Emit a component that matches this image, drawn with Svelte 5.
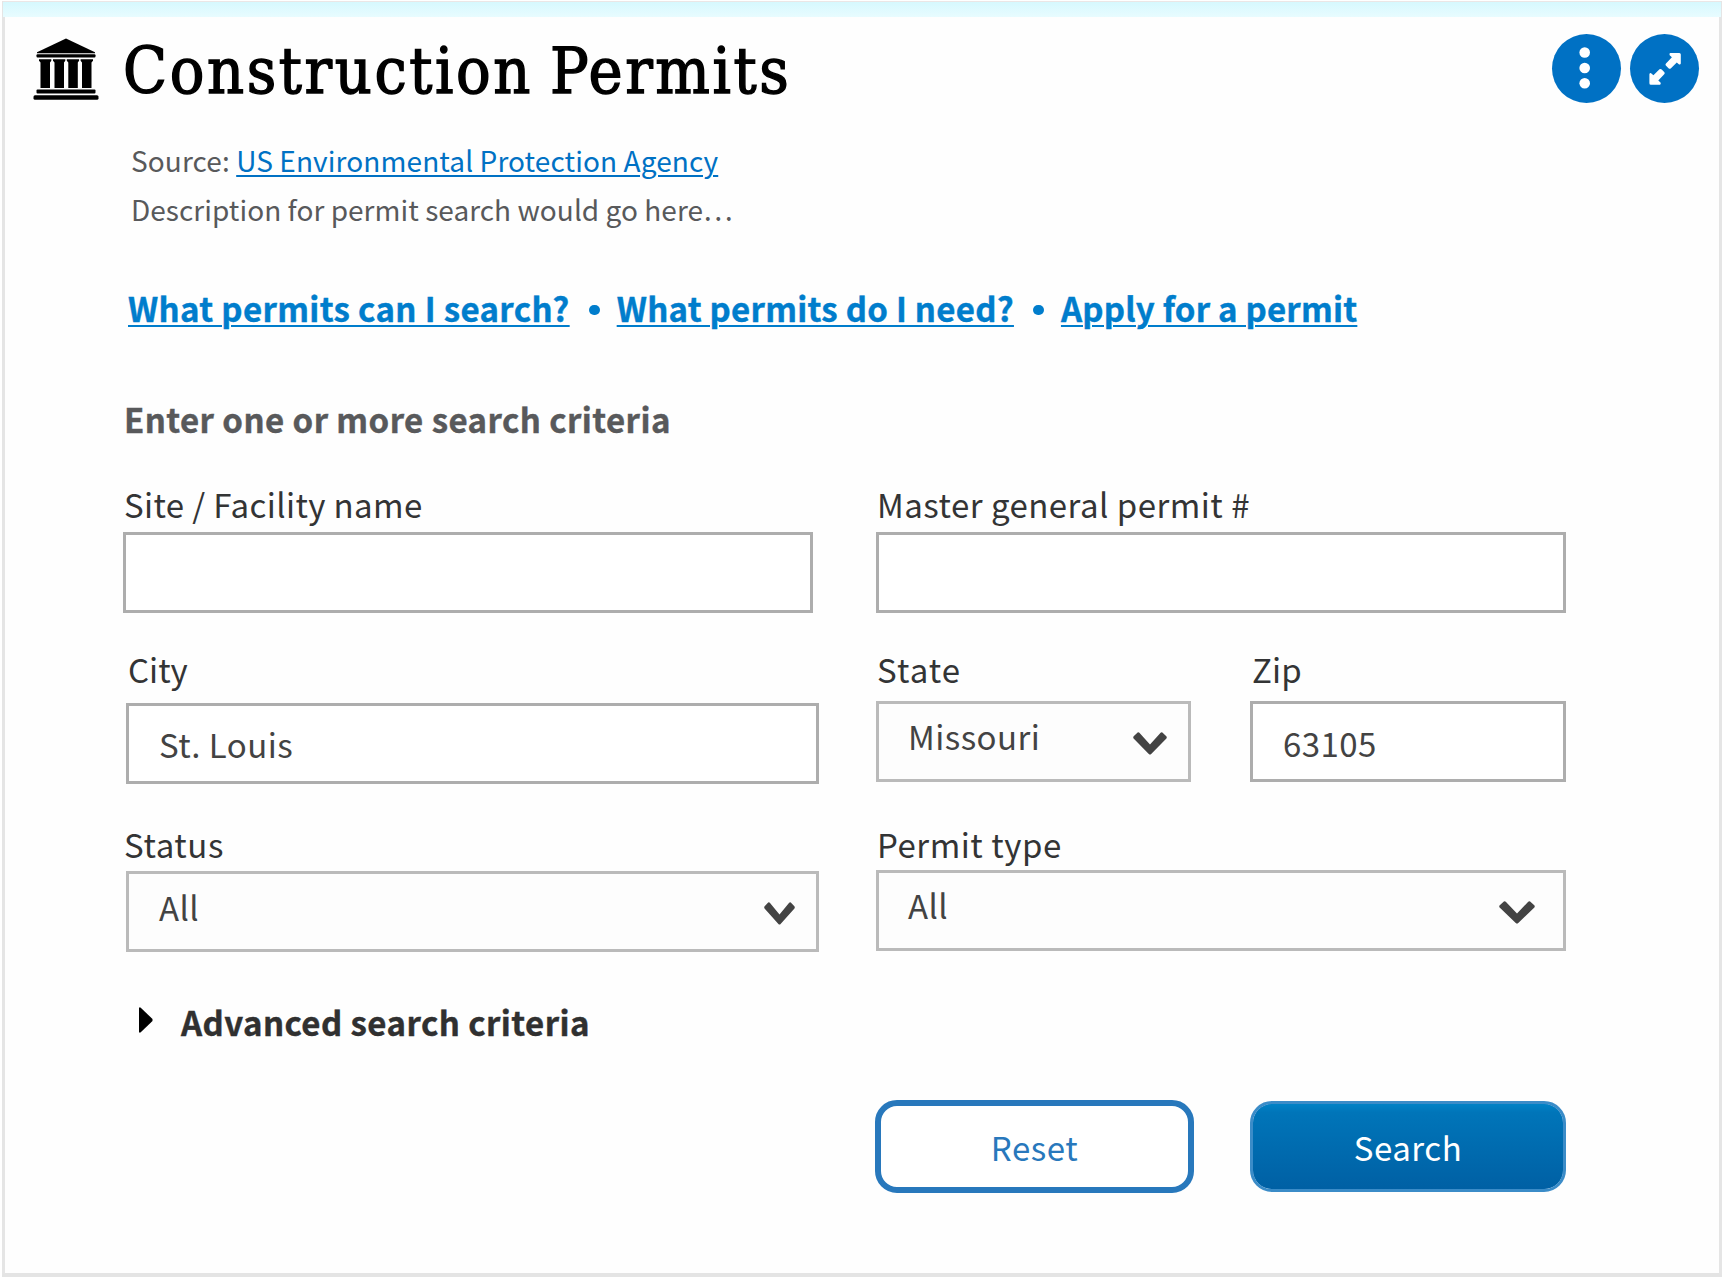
<script>
  let site = $state('');
  let master = $state('');
  let city = $state('St. Louis');
  let zip = $state('63105');
</script>

{#snippet chevron(size)}
  <svg class="chevron {size}" viewBox="0 0 34 23" preserveAspectRatio="none" aria-hidden="true">
    <path d="M4.6.6Q5.5 0 6.4.8L17 12.5 27.600.8Q28.500 0 29.400.6L33.300 4.300Q34.200 5.300 33.400 6.500L18.200 22Q17 23 15.800 22L.6 6.500Q-.2 5.300.7 4.300Z" />
  </svg>
{/snippet}

<main class="card">
  <div class="band"></div>
  <header>
    <svg class="bank" viewBox="0 0 66 63" aria-hidden="true">
      <path d="M33 0.400 62 14.300V15.300H4V14.300Z" />
      <rect x="3.500" y="16.300" width="59" height="3.300" rx="1" />
      <path d="M6 21.200H18.300V22.800L17 24.500V50H7.500V24.500L6 22.800Z M20 21.200H32.300V22.800L31 24.500V50H21.500V24.500L20 22.800Z M33.800 21.200H46.100V22.800L44.800 24.500V50H35.300V24.500L33.800 22.800Z M47.600 21.200H60V22.800L58.500 24.500V50H49V24.500L47.600 22.800Z" />
      <rect x="3.500" y="51.400" width="59" height="4.200" rx="1" />
      <rect x="0.500" y="57.200" width="65" height="4.600" rx="1.500" />
    </svg>
    <h1>Construction Permits</h1>
    <div class="actions">
      <button class="round" aria-label="More options">
        <svg viewBox="0 0 69 69"><g><circle cx="32.700" cy="18.500" r="5.300" /><circle cx="32.700" cy="34" r="5.300" /><circle cx="32.700" cy="49.300" r="5.300" /></g></svg>
      </button>
      <button class="round" aria-label="Expand">
        <svg viewBox="0 0 69 69">
          <path d="M40.300 19H49.300Q50.800 19 50.800 20.500V29.500Q50.300 31.200 48.800 30.300L46.800 28.400 40.700 34.400Q39.600 35.300 38.500 34.200L35.800 31.500Q35 30.400 36 29.400L41.900 23.300 39.700 21.200Q38.800 19.500 40.300 19Z" />
          <path d="M29.900 50.700H20.900Q19.400 50.700 19.400 49.200V40.200Q19.900 38.500 21.400 39.400L23.400 41.300 29.500 35.300Q30.600 34.400 31.700 35.500L34.400 38.200Q35.200 39.300 34.200 40.300L28.300 46.400 30.500 48.500Q31.400 50.200 29.900 50.700Z" />
        </svg>
      </button>
    </div>
  </header>

  <section class="meta">
    <p>Source: <a href="#epa">US Environmental Protection Agency</a></p>
    <p class="desc">Description for permit search would go here…</p>
  </section>

  <nav>
    <a class="n1" href="#which">What permits can I search?</a>
    <span class="dot"></span>
    <a class="n2" href="#need">What permits do I need?</a>
    <span class="dot"></span>
    <a class="n3" href="#apply">Apply for a permit</a>
  </nav>

  <h2>Enter one or more search criteria</h2>

  <form onsubmit={(e) => e.preventDefault()}>
    <div class="row first">
      <div class="field">
        <label class="site" for="site">Site / Facility name</label>
        <input id="site" bind:value={site} />
      </div>
      <div class="field">
        <label for="master">Master general permit #</label>
        <input id="master" bind:value={master} />
      </div>
    </div>

    <div class="row second">
      <div class="field outset city">
        <label for="city">City</label>
        <input id="city" bind:value={city} />
      </div>
      <div class="pair">
        <div class="field">
          <label class="state" for="state">State</label>
          <button type="button" id="state" class="select"><span>Missouri</span>{@render chevron('mid')}</button>
        </div>
        <div class="field">
          <label class="zip" for="zip">Zip</label>
          <input id="zip" class="code" bind:value={zip} />
        </div>
      </div>
    </div>

    <div class="row third">
      <div class="field outset status">
        <label for="status">Status</label>
        <button type="button" id="status" class="select"><span>All</span>{@render chevron('small')}</button>
      </div>
      <div class="field">
        <label class="type" for="type">Permit type</label>
        <button type="button" id="type" class="select"><span>All</span>{@render chevron('large')}</button>
      </div>
    </div>

    <div class="advanced">
      <svg viewBox="0 0 15 26" aria-hidden="true"><path d="M1 0.500H2.500L14.500 12V14L2.500 25.500H1Z" /></svg>
      <strong>Advanced search criteria</strong>
    </div>

    <div class="buttons">
      <button type="reset" class="reset">Reset</button>
      <button type="submit" class="search">Search</button>
    </div>
  </form>
</main>

<style>
  :global(body) {
    background: #fff;
  }
  * {
    box-sizing: border-box;
    margin: 0;
  }
  .card {
    width: 1720px;
    height: 1276px;
    margin: 1px 0 0 2px;
    border: 3px solid #e5e5e5;
    border-top: 1px solid #ebe6e6;
    border-bottom: 4px solid #e4e4e4;
    background: #fefefe;
    color: #333435;
    font: 33px/40px 'Noto Sans CJK SC', 'Noto Sans', sans-serif;
    letter-spacing: 0.480px;
    display: flex;
    flex-direction: column;
  }
  .band {
    flex: none;
    height: 15px;
    margin: 0 -2px;
    background: linear-gradient(#d6f8fe, #e8fcff);
  }
  header {
    display: flex;
    height: 69px;
    margin-top: 17px;
    padding: 0 20px 0 28px;
  }
  .bank {
    width: 66px;
    height: 63px;
    margin-top: 3.500px;
  }
  h1 {
    flex: 1;
    margin-left: 24px;
    font: 400 64px/80px 'DejaVu Serif Condensed', 'DejaVu Serif', serif;
    font-stretch: condensed;
    letter-spacing: 2.620px;
    word-spacing: -4px;
    color: #000;
    -webkit-text-stroke: 1.400px #000;
    margin-top: -3px;
    white-space: nowrap;
  }
  .actions {
    display: flex;
    gap: 9px;
  }
  .round {
    width: 69px;
    height: 69px;
    padding: 0;
    border: 0;
    border-radius: 50%;
    background: #0071c4;
  }
  .round svg {
    display: block;
    fill: #fff;
  }
  .meta {
    margin: 33px 0 0 126px;
    font-size: 28px;
    line-height: 49px;
    letter-spacing: 0.100px;
    color: #58595b;
  }
  .desc { letter-spacing: 0.040px; }
  .meta a {
    color: #0071c4;
    text-decoration-thickness: 2px;
    text-underline-offset: 3px;
  }
  nav {
    display: flex;
    align-items: center;
    margin: 54px 0 0 123px;
    font-weight: 700;
    white-space: nowrap;
  }
  nav a {
    color: #007dcc;
    text-decoration-thickness: 2px;
    text-underline-offset: 3px;
    -webkit-text-stroke: 0.400px #007dcc;
  }
  .n1 { letter-spacing: 0.350px; }
  .n2 { letter-spacing: 0.270px; }
  .n3 { letter-spacing: 0.220px; }
  .dot {
    width: 10.500px;
    height: 10.500px;
    margin: 4px 17px 0 19.500px;
    border-radius: 50%;
    background: #007dcc;
  }
  h2 {
    margin: 71px 0 0 119px;
    font-size: 33px;
    line-height: 40px;
    letter-spacing: 0.430px;
    color: #58595b;
    -webkit-text-stroke: 0.400px #58595b;
  }
  form {
    margin: 45px 0 0 118px;
    width: 1443px;
  }
  .row {
    display: grid;
    grid-template-columns: 690px 690px;
    column-gap: 63px;
  }
  .first { height: 165px; }
  .second { height: 175px; }
  .third { height: 178px; }
  .pair {
    display: grid;
    grid-template-columns: 315px 316px;
    column-gap: 59px;
  }
  .field {
    display: flex;
    flex-direction: column;
  }
  .outset {
    margin: 0 -6px 0 3px;
  }
  label {
    height: 48px;
    padding-left: 1px;
    white-space: nowrap;
  }
  .site { letter-spacing: 0.370px; }
  .second label { height: 52px; }
  .third label { height: 46px; }
  .city label { height: 54px; letter-spacing: 0; padding-left: 2px; }
  .status label { height: 47px; margin-left: -3px; letter-spacing: 0.600px; }
  .state { letter-spacing: 1.100px; }
  .zip { letter-spacing: 0.200px; padding-left: 2px; }
  .type { letter-spacing: 0.530px; }
  input,
  .select {
    width: 100%;
    height: 81px;
    padding: 0 30px;
    border: 3px solid #adadad;
    border-radius: 0;
    background: #fff;
    color: #434343;
    font: inherit;
    letter-spacing: 0.450px;
    outline: 0;
  }
  .code { padding-top: 2px; }
  .select {
    display: flex;
    justify-content: space-between;
    padding: 12px 21px 0 29px;
    border-color: #bababa;
    background: #fdfdfd;
  }
  .status .select { padding-left: 30px; }
  .status .select span { margin-top: 1px; }
  .chevron {
    height: 23px;
    margin-top: 16px;
    fill: #434343;
  }
  .mid { width: 34px; }
  .small { width: 31px; }
  .large { width: 36px; margin-right: 7px; }
  .advanced {
    display: flex;
    align-items: center;
    padding-left: 15px;
    gap: 28px;
    color: #303030;
    letter-spacing: 0.440px;
  }
  .advanced strong {
    -webkit-text-stroke: 0.400px #303030;
  }
  .advanced svg {
    width: 15px;
    height: 26px;
    margin-top: -5px;
    fill: #000;
  }
  .buttons {
    display: flex;
    justify-content: flex-end;
    gap: 56px;
    margin-top: 58px;
  }
  .buttons button {
    height: 93px;
    border-radius: 22px;
    font: inherit;
    letter-spacing: 0.550px;
    padding: 0;
  }
  .reset {
    width: 319px;
    border: 6px solid #2878bc;
    background: #fff;
    color: #2878bc;
  }
  .buttons .search {
    width: 316px;
    height: 91px;
    margin-top: 1px;
    border: 3px solid #3b8cc8;
    background: linear-gradient(#0082c6, #0075b9 10%, #0060a4);
    background-clip: padding-box;
    background-color: #3b8cc8;
    color: #fff;
    padding: 0;
  }
</style>
